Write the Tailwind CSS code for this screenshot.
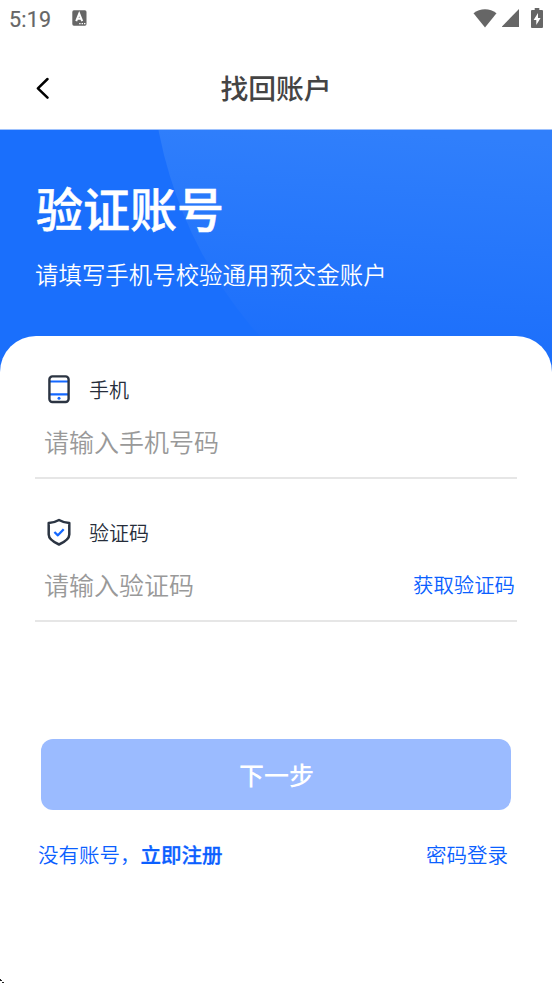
<!DOCTYPE html>
<html lang="zh-CN">
<head>
    <meta charset="UTF-8">
    <meta name="viewport" content="width=device-width, initial-scale=1.0">
    <title>找回账户</title>
    <script src="https://cdn.jsdelivr.net/npm/@tailwindcss/browser@4"></script>
</head>
<body class="relative h-[983px] overflow-hidden bg-white font-['Noto_Sans_CJK_SC',sans-serif] font-[350]">

    <!-- 状态栏 -->
    <div class="flex h-9 items-center pl-[9px] pr-[9px] text-[#666]">
        <span class="w-[63px] pt-[3px] font-[Roboto,sans-serif] text-[21.5px] font-normal leading-none tracking-[0.2px] [-webkit-text-stroke:0.2px_#666]">5:19</span>
        <svg class="-mt-[1px] h-[16px] w-[15px]" viewBox="0 0 15 16">
            <rect x="0.3" y="0.3" width="14.2" height="15.4" rx="1.6" fill="#666"/>
            <path d="M4.2 11.2 7.2 3.6 10.2 11.2M5.3 8.8h3.8" fill="none" stroke="#fff" stroke-width="2"/>
            <path d="M7.2 13.6h1.4M9.6 13.6h1.4M12 13.6h1.4" stroke="#fff" stroke-width="1.4"/>
        </svg>
        <div class="ml-auto flex items-start gap-[5px]">
            <svg class="mt-[1px] h-[19px] w-6" viewBox="0 0 24 19"><path d="M0.5 4.2C7-1 17-1 23.5 4.2L12 18.5Z" fill="#666"/></svg>
            <svg class="h-[19px] w-[17px]" viewBox="0 0 17 19"><path d="M17 1v18H-0.5Z" fill="#666"/></svg>
            <svg class="ml-[7px] h-5 w-3" viewBox="0 0 12 20">
                <path d="M3.7 0h4.6v2H11a1 1 0 0 1 1 1v16a1 1 0 0 1-1 1H1a1 1 0 0 1-1-1V3a1 1 0 0 1 1-1h2.7Z" fill="#666"/>
                <path d="M7 5 2.6 12h2.7v5L9.6 10H7Z" fill="#fff"/>
            </svg>
        </div>
    </div>

    <!-- 导航栏 -->
    <header class="grid h-[93px] grid-cols-[80px_1fr_80px] items-center pt-[10px]">
        <svg class="ml-9 h-[22px] w-[14px]" viewBox="0 0 14 22" fill="none" stroke="#000" stroke-width="2.5" stroke-linecap="round" stroke-linejoin="round">
            <path d="M11.5 2 1.9 11.3 11.5 20.6"/>
        </svg>
        <h1 class="-mt-[1px] text-center text-[27.8px] font-medium leading-10 text-[#444]">找回账户</h1>
    </header>

    <!-- 蓝色横幅 -->
    <section class="relative h-[247px] border-t border-[#9fc2fd] bg-[#1a6ffc] pl-9 text-white">
        <svg class="absolute left-0 top-0 h-[247px] w-[552px]" viewBox="0 130 552 247">
            <defs>
                <linearGradient id="glow" gradientUnits="userSpaceOnUse" x1="350" y1="130" x2="335" y2="350">
                    <stop offset="0" stop-color="#307ffb"/>
                    <stop offset="1" stop-color="#1c6ffb"/>
                </linearGradient>
            </defs>
            <circle cx="582" cy="50" r="431" fill="url(#glow)"/>
        </svg>
        <div class="relative pt-[45px]">
            <h2 class="text-[47px] font-medium leading-[64px] [-webkit-text-stroke:0.5px_#fff]">验证账号</h2>
            <p class="-ml-[1px] mt-[17px] text-[23.45px] leading-9">请填写手机号校验通用预交金账户</p>
        </div>
    </section>

    <!-- 表单卡片 -->
    <main class="relative -mt-10 rounded-t-[36px] bg-white px-[35px] pt-[33px]">
        <div class="h-[110px] border-b-2 border-[#e6e6e6]">
            <div class="flex h-10 items-center gap-[18px] pl-[13px]">
                <svg class="h-[29px] w-[23px]" viewBox="0 0 23 29" fill="none">
                    <path d="M2 6.5h18M2 19.4h18" stroke="#1468ff" stroke-width="2.2"/>
                    <circle cx="11" cy="23.2" r="1.5" fill="#1468ff"/>
                    <rect x="1.4" y="1.4" width="19.2" height="25.6" rx="3" stroke="#2b3442" stroke-width="2.4"/>
                </svg>
                <span class="pt-[1px] text-[20px] text-[#262d3a]">手机</span>
            </div>
            <div class="mt-[12px] pl-[9px] text-[25px] leading-10 text-[#999]">请输入手机号码</div>
        </div>

        <div class="mt-[33px] h-[110px] border-b-2 border-[#e6e6e6]">
            <div class="flex h-10 items-center gap-[18px] pl-[12px]">
                <svg class="h-[28px] w-6" viewBox="0 0 24 28" fill="none" stroke-linejoin="round">
                    <path d="M12 2C8.6 4 5 4.9 1.7 5v11.5c0 4 4 7.2 10.3 10 6.3-2.8 10.3-6 10.3-10V5C19 4.9 15.4 4 12 2Z" stroke="#2b3442" stroke-width="2.5"/>
                    <path d="m7.4 14 3.5 3.3 5.8-6" stroke="#1468ff" stroke-width="2.3"/>
                </svg>
                <span class="pt-[1px] text-[20px] text-[#262d3a]">验证码</span>
            </div>
            <div class="mt-[12px] flex items-center justify-between pl-[9px] pr-[2px] leading-10">
                <span class="text-[25px] text-[#999]">请输入验证码</span>
                <button class="text-[20.4px] text-[#0b5fff]">获取验证码</button>
            </div>
        </div>

        <div class="px-[6px] pt-[117px]">
            <button class="block h-[71px] w-full rounded-xl bg-[#9bbbff] pl-[1px] text-[25px] font-medium text-white">下一步</button>
        </div>
        <div class="mt-[24px] flex items-center justify-between pl-[3px] pr-[9px] text-[20.5px] leading-10 text-[#0b5fff]">
            <span>没有账号，<span class="font-medium [-webkit-text-stroke:0.3px_#0b5fff]">立即注册</span></span>
            <span>密码登录</span>
        </div>
    </main>

    <!-- 左下角的小黑点 -->
    <svg class="absolute bottom-0 left-0 h-1 w-1" viewBox="0 0 4 4"><path d="M0 0h1v1h1v1H0ZM2 3h2v1H2Z" fill="#222"/></svg>
</body>
</html>
